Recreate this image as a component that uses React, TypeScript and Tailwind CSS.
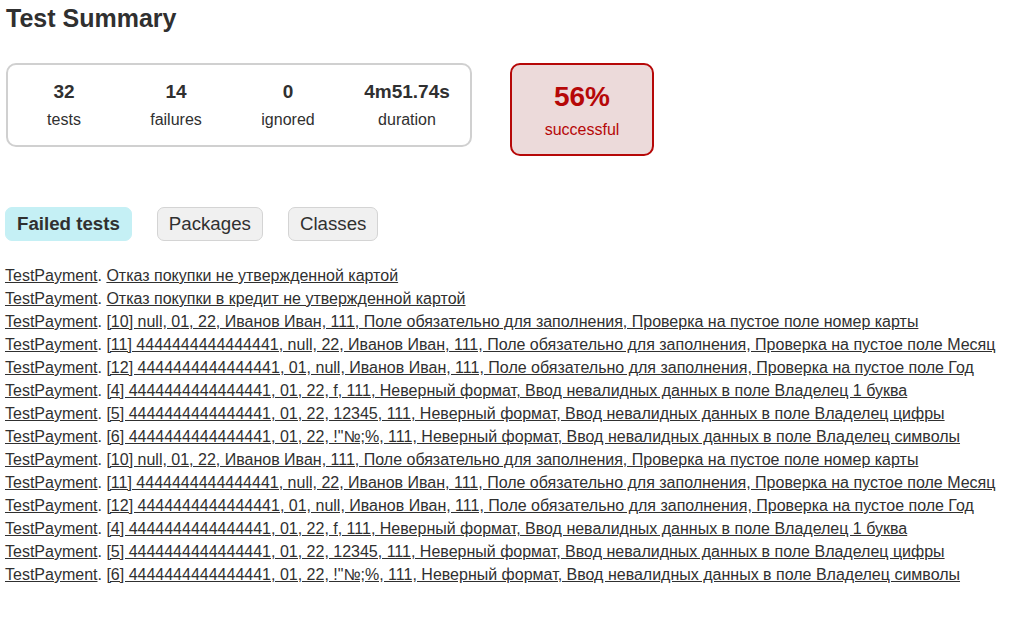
import React from "react";

const cases: string[] = [
  "[10] null, 01, 22, Иванов Иван, 111, Поле обязательно для заполнения, Проверка на пустое поле номер карты",
  "[11] 4444444444444441, null, 22, Иванов Иван, 111, Поле обязательно для заполнения, Проверка на пустое поле Месяц",
  "[12] 4444444444444441, 01, null, Иванов Иван, 111, Поле обязательно для заполнения, Проверка на пустое поле Год",
  "[4] 4444444444444441, 01, 22, f, 111, Неверный формат, Ввод невалидных данных в поле Владелец 1 буква",
  "[5] 4444444444444441, 01, 22, 12345, 111, Неверный формат, Ввод невалидных данных в поле Владелец цифры",
  '[6] 4444444444444441, 01, 22, !"№;%, 111, Неверный формат, Ввод невалидных данных в поле Владелец символы',
];

const failed: string[] = [
  "Отказ покупки не утвержденной картой",
  "Отказ покупки в кредит не утвержденной картой",
  ...cases,
  ...cases,
];

const counters = [
  { value: "32", label: "tests", w: "w-[112px]" },
  { value: "14", label: "failures", w: "w-[112px]" },
  { value: "0", label: "ignored", w: "w-[112px]" },
  { value: "4m51.74s", label: "duration", w: "w-[126px]" },
];

function Tab({ title, selected }: { title: string; selected?: boolean }) {
  return (
    <div
      className={`px-[11px] py-[5px] rounded-[7px] border leading-[22px] text-[18.7px] ${
        selected
          ? "bg-[#c5f0f5] border-[#c5f0f5] font-bold"
          : "bg-[#f0f0f0] border-[#d4d4d4]"
      }`}
    >
      {title}
    </div>
  );
}

export default function App() {
  return (
    <div
      className="min-h-screen bg-white text-[#303030] text-[16px] pl-[5px] pt-[4px]"
      style={{ fontFamily: '"Liberation Sans", Arial, sans-serif' }}
    >
      <h1 className="text-[25px] font-bold leading-[29px] pl-[1px]">Test Summary</h1>

      <div className="flex items-start mt-[30px] pl-[1px]">
        <div className="flex border-2 border-[#d0d0d0] rounded-[10px]">
          {counters.map((c) => (
            <div key={c.label} className={`${c.w} pt-[16px] pb-[16px] text-center`}>
              <p className="text-[19px] font-bold leading-[22px] mb-[8px]">{c.value}</p>
              <p className="leading-[18px]">{c.label}</p>
            </div>
          ))}
        </div>
        <div className="ml-[38px] w-[144px] border-2 border-[#b60808] bg-[#ecdada] rounded-[10px] pt-[15px] pb-[15px] text-center text-[#b60808]">
          <p className="text-[28px] font-bold leading-[33px] mb-[8px]">56%</p>
          <p className="leading-[18px]">successful</p>
        </div>
      </div>

      <div className="flex gap-[25px] mt-[51px]">
        <Tab title="Failed tests" selected />
        <Tab title="Packages" />
        <Tab title="Classes" />
      </div>

      <ul className="mt-[26px]">
        {failed.map((name, i) => (
          <li key={i} className="leading-[18px] mb-[5px] whitespace-nowrap">
            <a href="#" className="underline">
              TestPayment
            </a>
            .{" "}
            <a href="#" className="underline">
              {name}
            </a>
          </li>
        ))}
      </ul>
    </div>
  );
}
